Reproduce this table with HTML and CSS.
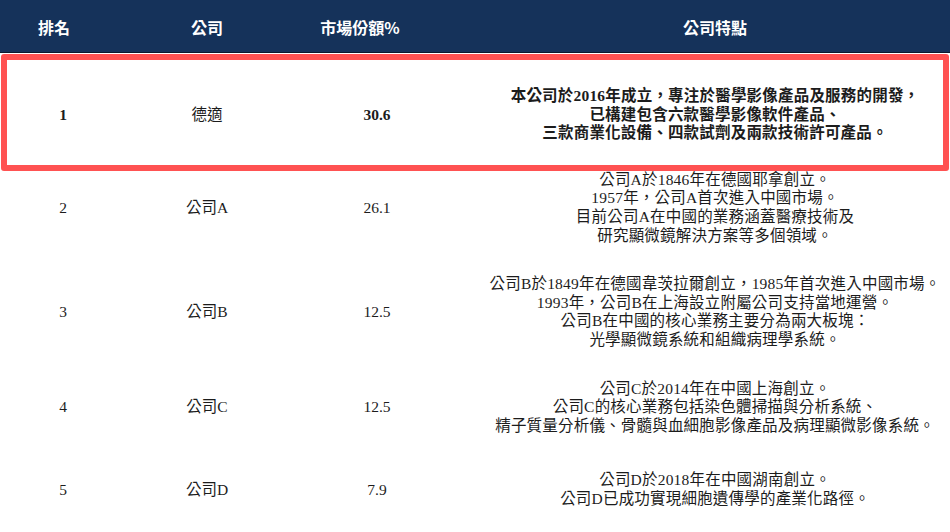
FILE: index.html
```html
<!DOCTYPE html>
<html lang="zh-Hant">
<head>
<meta charset="utf-8">
<title>市場份額</title>
<link rel="stylesheet" href="styles.css">
</head>
<body>
<div class="page">
  <div class="head">
    <div class="hc hc-rank">排名</div>
    <div class="hc">公司</div>
    <div class="hc hc-share">市場份額%</div>
    <div class="hc hc-desc">公司特點</div>
  </div>
  <div class="row row-first">
    <div class="c c-rank b">1</div>
    <div class="c">德適</div>
    <div class="c c-share b">30.6</div>
    <div class="c c-desc b">本公司於2016年成立，專注於醫學影像產品及服務的開發，<br>已構建包含六款醫學影像軟件產品、<br>三款商業化設備、四款試劑及兩款技術許可產品。</div>
  </div>
  <div class="row">
    <div class="c c-rank">2</div>
    <div class="c">公司A</div>
    <div class="c c-share">26.1</div>
    <div class="c c-desc">公司A於1846年在德國耶拿創立。<br>1957年，公司A首次進入中國市場。<br>目前公司A在中國的業務涵蓋醫療技術及<br>研究顯微鏡解決方案等多個領域。</div>
  </div>
  <div class="row">
    <div class="c c-rank">3</div>
    <div class="c">公司B</div>
    <div class="c c-share">12.5</div>
    <div class="c c-desc">公司B於1849年在德國韋茨拉爾創立，1985年首次進入中國市場。<br>1993年，公司B在上海設立附屬公司支持當地運營。<br>公司B在中國的核心業務主要分為兩大板塊：<br>光學顯微鏡系統和組織病理學系統。</div>
  </div>
  <div class="row">
    <div class="c c-rank">4</div>
    <div class="c">公司C</div>
    <div class="c c-share">12.5</div>
    <div class="c c-desc">公司C於2014年在中國上海創立。<br>公司C的核心業務包括染色體掃描與分析系統、<br>精子質量分析儀、骨髓與血細胞影像產品及病理顯微影像系統。</div>
  </div>
  <div class="row row-last">
    <div class="c c-rank">5</div>
    <div class="c">公司D</div>
    <div class="c c-share">7.9</div>
    <div class="c c-desc">公司D於2018年在中國湖南創立。<br>公司D已成功實現細胞遺傳學的產業化路徑。</div>
  </div>
  <div class="highlight"></div>
</div>
</body>
</html>
```

FILE: styles.css
```css
* { box-sizing: border-box; }
html, body { margin: 0; padding: 0; background: #ffffff; }
.page {
  position: relative;
  width: 950px;
  height: 532px;
  overflow: hidden;
}
.head, .row {
  display: grid;
  grid-template-columns: 126px 162px 178px 1fr;
  align-items: center;
  text-align: center;
}
.head {
  height: 53px;
  background: #15325a;
  border-bottom: 1px solid #0b1a2e;
  color: #ffffff;
  font-family: "Noto Sans CJK TC", "Noto Sans", sans-serif;
  font-weight: 700;
  font-size: 16px;
  line-height: 20px;
  padding-top: 2px;
}
.hc-rank { padding-right: 18px; }
.hc-share { padding-right: 34px; }
.hc-desc { padding-left: 14px; }
.row {
  padding: 15px 0;
  color: #1c1c1c;
  font-family: "Liberation Serif", "Noto Sans CJK TC", serif;
  font-size: 15.5px;
  line-height: 18.6px;
}
.row-first { padding-top: 34px; padding-bottom: 13px; }
.row-last { padding-top: 21px; }
.c-desc { padding-left: 14px; white-space: nowrap; letter-spacing: 0.2px; }
.b { font-weight: 700; }
.highlight {
  position: absolute;
  left: 1px;
  top: 54px;
  width: 948px;
  height: 117px;
  border: 6px solid #ff5252;
  border-radius: 3px;
  pointer-events: none;
}
```
